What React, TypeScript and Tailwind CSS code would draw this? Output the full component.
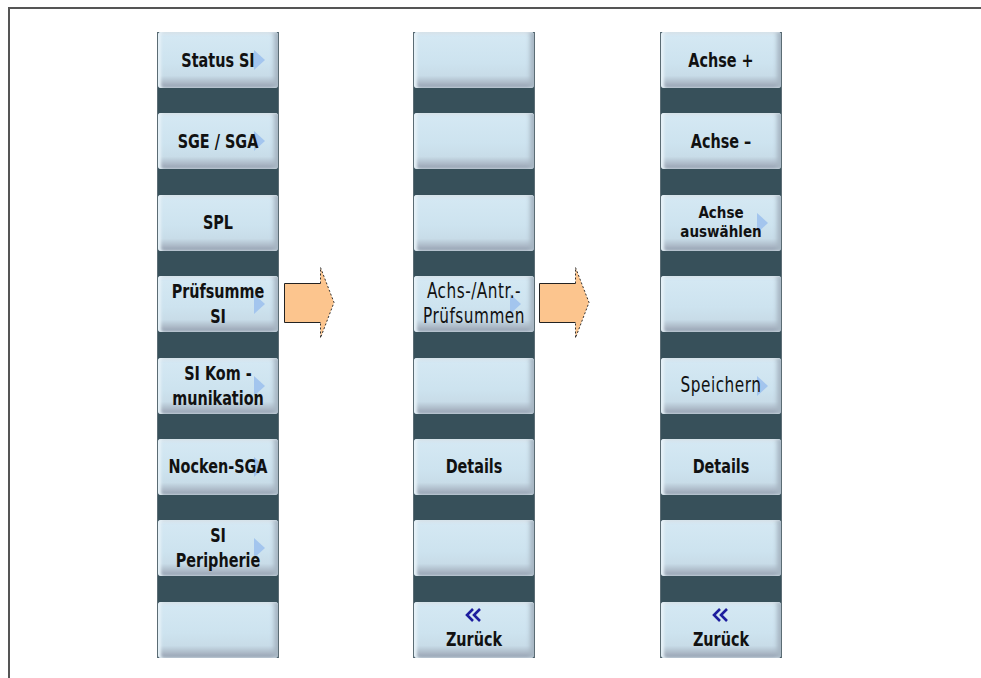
import React from 'react'

type KeyProps = {
  lines?: string[]
  arrow?: boolean
  back?: boolean
  thin?: boolean
  tight?: boolean
}

function Key({ lines = [], arrow, back, thin, tight }: KeyProps) {
  return (
    <div className="relative h-[56px] shrink-0 rounded-[3px] bg-[linear-gradient(to_bottom,#eaf4fa_0px,#d4e8f3_4px,#cde3ef_55%,#c8dce8_78%,#a9b6c4_92%,#8f9cad_100%)] shadow-[inset_3px_0_3px_#e6f1f7,inset_-4px_0_4px_#a7b6c3] flex flex-col items-center justify-center overflow-hidden">
      {arrow && (
        <div className="absolute right-[13px] top-1/2 -translate-y-1/2 w-0 h-0 border-y-[10px] border-y-transparent border-l-[11px] border-l-[#a3c5ee]" />
      )}
      {back && (
        <svg width="18" height="14" viewBox="0 0 18 14" className="relative z-10 mb-[5px]">
          <path d="M8 1 L2 7 L8 13" fill="none" stroke="#1d1d9e" strokeWidth="2.6" />
          <path d="M15 1 L9 7 L15 13" fill="none" stroke="#1d1d9e" strokeWidth="2.6" />
        </svg>
      )}
      {lines.map((l, i) => (
        <span
          key={i}
          className={`relative z-10 block whitespace-nowrap text-[#111] font-['DejaVu_Sans_Condensed','DejaVu_Sans',sans-serif] ${
            thin ? 'font-normal text-[17px] tracking-[0.5px]' : 'font-bold'
          } ${tight ? 'text-[15px] leading-[19px]' : 'leading-[25px] scale-y-125'} ${
            !thin && !tight ? 'text-[16px]' : ''
          }`}
        >
          {l}
        </span>
      ))}
    </div>
  )
}

function Column({ keys }: { keys: KeyProps[] }) {
  return (
    <div className="w-[122px] shrink-0 flex flex-col gap-[25.4px] bg-[#37505a] border-x border-[#5b6c74]">
      {keys.map((k, i) => (
        <Key key={i} {...k} />
      ))}
    </div>
  )
}

function BlockArrow() {
  return (
    <svg width="52" height="72" viewBox="0 0 52 72">
      <path d="M0.5 16.5 H36.5 V0.5 L50 35.5 L36.5 71 V55.5 H0.5 Z" fill="#fcc58e" />
      <path d="M36.5 16.5 H0.5 V55.5 H36.5" fill="none" stroke="#222" strokeWidth="1" />
      <path d="M36.5 16.5 V0.5 L50 35.5 L36.5 71 V55.5" fill="none" stroke="#333" strokeWidth="1" strokeDasharray="2 2" />
    </svg>
  )
}

export default function App() {
  const left: KeyProps[] = [
    { lines: ['Status SI'], arrow: true },
    { lines: ['SGE / SGA'], arrow: true },
    { lines: ['SPL'] },
    { lines: ['Prüfsumme', 'SI'], arrow: true },
    { lines: ['SI Kom -', 'munikation'], arrow: true },
    { lines: ['Nocken-SGA'], arrow: true },
    { lines: ['SI', 'Peripherie'], arrow: true },
    {},
  ]
  const middle: KeyProps[] = [
    {},
    {},
    {},
    { lines: ['Achs-/Antr.-', 'Prüfsummen'], arrow: true, thin: true },
    {},
    { lines: ['Details'] },
    {},
    { lines: ['Zurück'], back: true },
  ]
  const right: KeyProps[] = [
    { lines: ['Achse +'] },
    { lines: ['Achse –'] },
    { lines: ['Achse', 'auswählen'], arrow: true, tight: true },
    {},
    { lines: ['Speichern'], arrow: true, thin: true },
    { lines: ['Details'] },
    {},
    { lines: ['Zurück'], back: true },
  ]

  return (
    <div className="w-[981px] h-[678px] bg-white overflow-hidden">
      <div className="ml-[8px] mt-[7px] h-[671px] border-t-2 border-l-2 border-[#555] flex items-start pl-[147px] pt-[23px]">
        <Column keys={left} />
        <div className="ml-[5px] mr-[77px] mt-[235px] shrink-0">
          <BlockArrow />
        </div>
        <Column keys={middle} />
        <div className="ml-[4px] mr-[69px] mt-[235px] shrink-0">
          <BlockArrow />
        </div>
        <Column keys={right} />
      </div>
    </div>
  )
}
